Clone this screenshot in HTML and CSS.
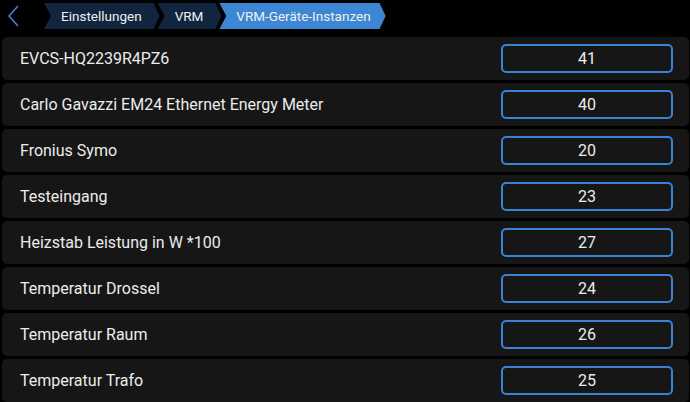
FILE: index.html
```html
<!DOCTYPE html>
<html>
<head>
<meta charset="utf-8">
<link rel="stylesheet" href="styles.css">
</head>
<body>
<div class="header">
  <svg class="back" width="14" height="24" viewBox="0 0 14 24"><polyline points="11,2 2,12 11,22" fill="none" stroke="#3a84d6" stroke-width="1.6"/></svg>
  <div class="crumbs">
    <div class="crumb dark">Einstellungen</div>
    <div class="crumb dark">VRM</div>
    <div class="crumb active">VRM-Geräte-Instanzen</div>
  </div>
</div>
<div class="list">
  <div class="row"><span class="label">EVCS-HQ2239R4PZ6</span><div class="field">41</div></div>
  <div class="row"><span class="label">Carlo Gavazzi EM24 Ethernet Energy Meter</span><div class="field">40</div></div>
  <div class="row"><span class="label">Fronius Symo</span><div class="field">20</div></div>
  <div class="row"><span class="label">Testeingang</span><div class="field">23</div></div>
  <div class="row"><span class="label">Heizstab Leistung in W *100</span><div class="field">27</div></div>
  <div class="row"><span class="label">Temperatur Drossel</span><div class="field">24</div></div>
  <div class="row"><span class="label">Temperatur Raum</span><div class="field">26</div></div>
  <div class="row"><span class="label">Temperatur Trafo</span><div class="field">25</div></div>
</div>
</body>
</html>
```
FILE: styles.css
```css
html, body {
  margin: 0;
  padding: 0;
  background: #000;
  width: 690px;
  height: 402px;
  overflow: hidden;
  font-family: Roboto, "Liberation Sans", sans-serif;
  color: #ececec;
}
.header {
  height: 37px;
  display: flex;
  align-items: flex-start;
}
.back {
  margin: 4px 0 0 7px;
}
.crumbs {
  display: flex;
  margin: 3px 0 0 23px;
}
.crumb {
  height: 26px;
  line-height: 26px;
  font-size: 13.5px;
  color: #f0f0f0;
  padding: 0 18px 0 17px;
  clip-path: polygon(0 0, calc(100% - 6px) 0, 100% 50%, calc(100% - 6px) 100%, 0 100%, 7px 50%);
  margin-right: -2px;
}
.crumb.dark {
  background: #11253e;
}
.crumb.active {
  background: #3c86d4;
  padding-right: 15px;
}
.list {
  display: flex;
  flex-direction: column;
  gap: 3px;
  padding: 0 1px 0 2px;
}
.row {
  height: 43px;
  flex: none;
  background: #161616;
  border-radius: 5px;
  display: flex;
  align-items: center;
  justify-content: space-between;
  padding: 0 16px 0 18px;
}
.label {
  font-size: 16px;
}
.field {
  width: 168px;
  height: 25px;
  border: 2px solid #3a82d4;
  border-radius: 5px;
  text-align: center;
  line-height: 25px;
  font-size: 16px;
}
```
